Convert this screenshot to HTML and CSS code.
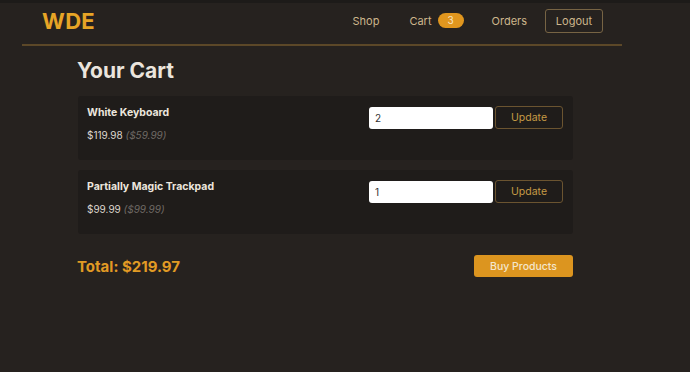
FILE: index.html
```html
<!DOCTYPE html>
<html>
<head>
<meta charset="utf-8">
<link rel="stylesheet" href="styles.css">
</head>
<body>
<header class="topbar">
  <div class="logo">WDE</div>
  <nav class="nav">
    <a class="nav-link shop-link">Shop</a>
    <a class="nav-link cart-link">Cart <span class="badge">3</span></a>
    <a class="nav-link orders-link">Orders</a>
    <button class="logout">Logout</button>
  </nav>
</header>
<main class="main">
  <h1 class="title">Your Cart</h1>
  <div class="item">
    <div class="info">
      <div class="name">White Keyboard</div>
      <div class="price">$119.98 <span class="unit">($59.99)</span></div>
    </div>
    <div class="controls">
      <input class="qty" type="text" value="2">
      <button class="update">Update</button>
    </div>
  </div>
  <div class="item">
    <div class="info">
      <div class="name">Partially Magic Trackpad</div>
      <div class="price">$99.99 <span class="unit">($99.99)</span></div>
    </div>
    <div class="controls">
      <input class="qty" type="text" value="1">
      <button class="update">Update</button>
    </div>
  </div>
  <div class="footer">
    <div class="total">Total: $219.97</div>
    <button class="buy">Buy Products</button>
  </div>
</main>
</body>
</html>
```
FILE: styles.css
```css
html, body {
  margin: 0;
  padding: 0;
}
body {
  background: #26221f;
  border-top: 3px solid #1d1b19;
  height: 369px;
  font-family: Inter, "Noto Sans", sans-serif;
  color: #e8e2da;
  overflow: hidden;
}
.topbar {
  margin: 0 68px 0 22px;
  height: 43px;
  padding: 0 19px 6px 20px;
  box-sizing: border-box;
  border-bottom: 2px solid #5c4828;
  display: flex;
  align-items: center;
  justify-content: space-between;
}
.logo {
  color: #e7a526;
  font-weight: 700;
  font-size: 22px;
  letter-spacing: 0.3px;
}
.nav {
  display: flex;
  align-items: center;
}
.nav-link {
  color: #cdb68c;
  font-size: 11px;
  display: flex;
  align-items: center;
}
.shop-link {
  margin-right: 30px;
}
.cart-link {
  margin-right: 28px;
}
.orders-link {
  margin-right: 18px;
}
.badge {
  display: inline-block;
  background: #e0961e;
  color: #f6e4c2;
  border-radius: 8px;
  width: 26px;
  height: 15px;
  line-height: 15px;
  text-align: center;
  font-size: 10px;
  margin-left: 6px;
}
.logout {
  background: transparent;
  border: 1px solid #776444;
  border-radius: 3px;
  color: #cdb68c;
  font-family: inherit;
  font-size: 11px;
  width: 58px;
  height: 24px;
  padding: 0;
}
.main {
  margin-left: 78px;
  width: 495px;
}
.title {
  font-size: 21px;
  font-weight: 700;
  margin: 12px 0 13px -1px;
  line-height: 25px;
  color: #ebe5dd;
}
.item {
  background: #1f1c1a;
  border-radius: 3px;
  height: 64px;
  margin-bottom: 10px;
  display: flex;
  justify-content: space-between;
  align-items: flex-start;
  padding: 0 10px 0 9px;
  box-sizing: border-box;
}
.info {
  padding-top: 10px;
}
.name {
  font-weight: 700;
  font-size: 10.5px;
  line-height: 14px;
  color: #ece6de;
}
.price {
  font-size: 10px;
  margin-top: 8px;
  line-height: 14px;
  color: #ddd6ce;
}
.unit {
  font-style: italic;
  color: #6f6a65;
}
.controls {
  display: flex;
  align-items: center;
  padding-top: 10px;
  gap: 2px;
}
.qty {
  width: 124px;
  height: 22px;
  box-sizing: border-box;
  border: none;
  border-radius: 3px;
  background: #fff;
  padding: 0 6px;
  font-family: inherit;
  font-size: 10px;
  color: #333;
}
.update {
  width: 68px;
  height: 23px;
  background: #1f1c1a;
  border: 1px solid #6b5430;
  border-radius: 3px;
  color: #c59a45;
  font-family: inherit;
  font-size: 10.5px;
  padding: 0;
}
.footer {
  display: flex;
  justify-content: space-between;
  align-items: center;
  margin-top: 21px;
}
.total {
  font-size: 15px;
  font-weight: 700;
  color: #e19a24;
  margin-left: -1px;
}
.buy {
  width: 99px;
  height: 22px;
  background: #dc951f;
  border: none;
  border-radius: 3px;
  color: #f4e6cc;
  font-family: inherit;
  font-size: 10.5px;
  font-weight: 500;
  padding: 0;
}
```
